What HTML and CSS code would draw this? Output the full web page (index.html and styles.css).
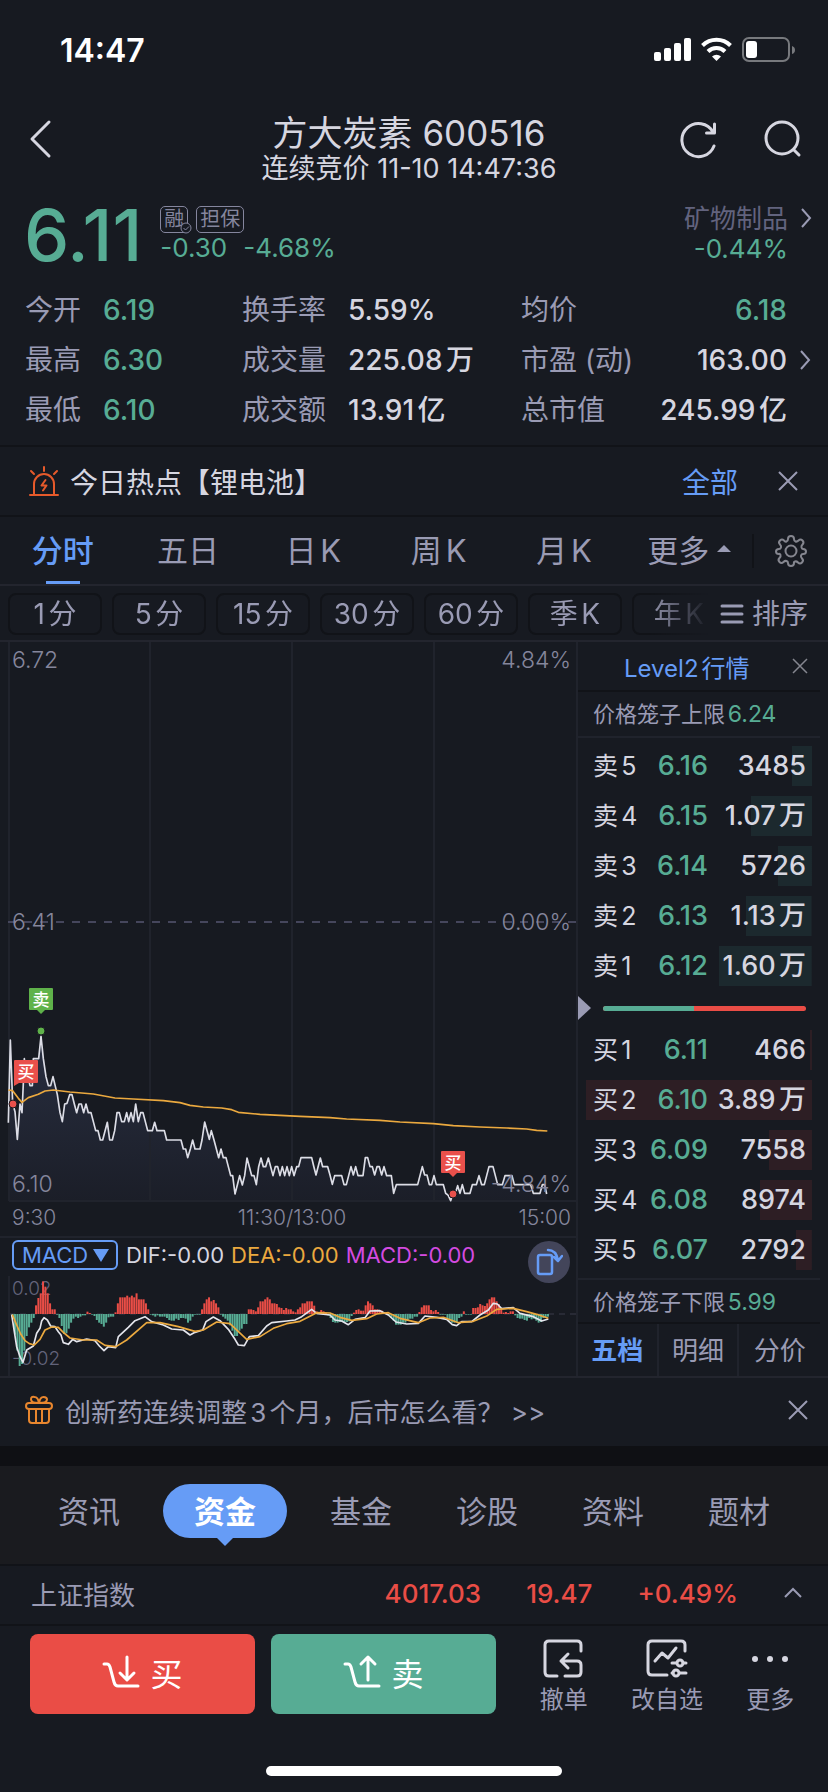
FILE: index.html
```html
<!DOCTYPE html>
<html lang="zh-CN">
<head>
  <meta charset="UTF-8">
  <meta name="viewport" content="width=device-width, initial-scale=1">
  <title>方大炭素 600516</title>
  <link rel="stylesheet" href="styles.css">
</head>
<body>
  <!-- 状态栏 -->
  <div class="status-bar">
    <span class="clock">14:47</span>
    <svg class="status-icons" viewBox="0 0 142 26" width="142" height="26">
      <g fill="#fff">
        <rect x="0" y="15" width="7" height="9" rx="2"/>
        <rect x="10" y="11" width="7" height="13" rx="2"/>
        <rect x="20" y="6" width="7" height="18" rx="2"/>
        <rect x="30" y="1" width="7" height="23" rx="2"/>
        <path d="M62.500 24l-4.500-4.500a6.500 6.500 0 0 1 9 0z"/>
      </g>
      <g fill="none" stroke="#fff" stroke-width="4">
        <path d="M48.500 8.500a20 20 0 0 1 28 0"/>
        <path d="M54 14.500a12 12 0 0 1 17 0"/>
      </g>
      <rect x="89" y="1" width="46" height="23" rx="6" fill="none" stroke="#77797d" stroke-width="2"/>
      <rect x="92" y="4" width="11" height="17" rx="3" fill="#fff"/>
      <path d="M138 9q3 1 3 4t-3 4z" fill="#77797d"/>
    </svg>
  </div>

  <!-- 标题 -->
  <header class="header">
    <button class="icon-btn" aria-label="返回">
      <svg width="24" height="40" viewBox="0 0 24 40"><path d="M21 3L4 20l17 17" class="line-light"/></svg>
    </button>
    <div class="header-title">
      <h1>方大炭素 600516</h1>
      <p>连续竞价 11-10 14:47:36</p>
    </div>
    <div class="header-actions">
      <button class="icon-btn" aria-label="刷新">
        <svg width="38" height="40" viewBox="0 0 38 40"><path d="M34 27A16.600 16.600 0 1 1 33 13M34.500 5v9h-8" class="line-light"/></svg>
      </button>
      <button class="icon-btn" aria-label="搜索">
        <svg width="38" height="38" viewBox="0 0 38 38"><circle cx="18" cy="18" r="16" class="line-light"/><path d="M30 30l5 5" class="line-light"/></svg>
      </button>
    </div>
  </header>

  <!-- 报价 -->
  <section class="quote">
    <div class="price">6.11</div>
    <div class="quote-info">
      <div class="tags">
        <span class="tag">融<svg class="tag-check" width="12" height="12" viewBox="0 0 12 12"><circle cx="6" cy="6" r="5" fill="#171a21" stroke="#85869e"/><path d="M3.500 6l2 2L9 4.500" fill="none" stroke="#85869e"/></svg></span>
        <span class="tag">担保</span>
      </div>
      <div class="change"><span>-0.30</span><span>-4.68%</span></div>
    </div>
    <a class="sector" href="#">
      <span class="sector-text"><span class="sector-name">矿物制品</span><span class="sector-change">-0.44%</span></span>
      <svg width="12" height="20" viewBox="0 0 12 20"><path d="M2 1l8 9-8 9" class="line-muted"/></svg>
    </a>
  </section>

  <section class="stats">
    <dl class="stats-col">
      <div><dt>今开</dt><dd class="down">6.19</dd></div>
      <div><dt>最高</dt><dd class="down">6.30</dd></div>
      <div><dt>最低</dt><dd class="down">6.10</dd></div>
    </dl>
    <dl class="stats-col">
      <div><dt>换手率</dt><dd>5.59%</dd></div>
      <div><dt>成交量</dt><dd>225.08万</dd></div>
      <div><dt>成交额</dt><dd>13.91亿</dd></div>
    </dl>
    <dl class="stats-col stats-end">
      <div><dt>均价</dt><dd class="down">6.18</dd></div>
      <div><dt>市盈 (动)</dt><dd>163.00<svg class="more-arrow" width="12" height="20" viewBox="0 0 12 20"><path d="M2 1l8 9-8 9" class="line-muted"/></svg></dd></div>
      <div><dt>总市值</dt><dd>245.99亿</dd></div>
    </dl>
  </section>

  <!-- 今日热点 -->
  <section class="hot">
    <svg width="32" height="32" viewBox="0 0 32 32" fill="none" stroke="#e65a2b" stroke-width="2" stroke-linecap="round" stroke-linejoin="round">
      <path d="M2 30h28M6 30V19a10 10 0 0 1 20 0v11M16 2v4M3 6l3 3M29 6l-3 3"/>
      <path d="M17.500 15l-4 5.500h5l-3.500 5"/>
    </svg>
    <span class="hot-text">今日热点【锂电池】</span>
    <a href="#" class="hot-all">全部</a>
    <button class="icon-btn" aria-label="关闭热点">
      <svg width="20" height="20" viewBox="0 0 20 20"><path d="M1 1l18 18M19 1L1 19" class="line-muted"/></svg>
    </button>
  </section>

  <!-- 周期切换 -->
  <nav class="tabs">
    <div class="tabs-list">
      <button class="tab active">分时</button>
      <button class="tab">五日</button>
      <button class="tab">日K</button>
      <button class="tab">周K</button>
      <button class="tab">月K</button>
      <button class="tab">更多<svg width="14" height="8" viewBox="0 0 14 8"><path d="M0 7l7-7 7 7z" fill="#9a9bb4"/></svg></button>
    </div>
    <button class="tabs-setting" aria-label="设置">
      <svg width="34" height="34" viewBox="0 0 34 34" fill="none" stroke="#85868f" stroke-width="2" stroke-linejoin="round">
        <path d="M14 5q0-3 3-3t3 3q0 2 1.500 2.500t3-1q2-2 4 0t0 4q-1.500 1.500-1 3T29 15q3 0 3 2.500T29 20q-1.500 0-2 1.500t1 3q2 2 0 4t-4 0q-1.500-1.500-3-1T20 29q0 3-3 3t-3-3q0-1.500-1.500-2t-3 1q-2 2-4 0t0-4q1.500-1.500 1-3T5 20q-3 0-3-2.500T5 15q1.500 0 2-1.500t-1-3q-2-2 0-4t4 0q1 1.500 2.500 1T14 5z"/>
        <circle cx="17" cy="17" r="5.500"/>
      </svg>
    </button>
  </nav>
  <div class="periods">
    <div class="periods-list">
      <button>1分</button>
      <button>5分</button>
      <button>15分</button>
      <button>30分</button>
      <button>60分</button>
      <button>季K</button>
      <button>年K</button>
    </div>
    <button class="sort">
      <svg width="24" height="20" viewBox="0 0 24 20"><path d="M2 2h20M2 10h20M2 18h20" stroke="#9a9bb4" stroke-width="3" stroke-linecap="round"/></svg>
      排序
    </button>
  </div>

  <main class="market">
    <div class="charts">
      <!-- 分时图 -->
      <svg class="chart" viewBox="0 642 576 594">
        <defs>
          <linearGradient id="area" x1="0" y1="0" x2="0" y2="1">
            <stop offset="0" stop-color="#282e40"/>
            <stop offset="1" stop-color="#1b1e28"/>
          </linearGradient>
        </defs>
        <polygon id="priceArea" fill="url(#area)" transform="translate(0 960) scale(.33333)"/>
        <path d="M9 642v559M150 642v559M292 642v559M434 642v559M9 1201h567" class="grid-line"/>
        <path d="M8 922H576" stroke="#45465c" stroke-width="2" stroke-dasharray="8 8"/>
        <g transform="translate(0 960) scale(.33333)" fill="none" stroke-width="5" stroke-linejoin="round">
          <polyline id="priceLine" stroke="#dcdde6" points="25,488 31,240 38,430 45,455 52,538 60,432 66,458 70,370 73,296 76,330 84,350 90,377 97,377 100,296 116,296 123,229 130,296 138,350 145,377 152,377 159,350 172,404 180,458 187,485 194,432 201,430 209,404 216,404 223,432 230,458 237,432 244,432 251,458 258,432 265,458 273,458 280,485 287,512 294,512 301,540 308,540 322,487 329,540 337,540 344,512 351,458 358,458 365,485 373,485 380,458 386,485 393,458 400,485 407,432 415,485 422,458 429,458 436,485 443,512 457,512 464,487 471,512 493,512 500,540 543,540 550,567 557,567 563,593 571,567 578,540 585,567 600,567 606,540 614,486 628,538 634,512 642,540 656,593 663,567 670,593 678,593 685,620 692,647 698,647 705,702 712,675 719,647 727,675 734,647 741,594 748,620 755,647 762,647 769,674 776,620 783,594 790,620 797,620 805,594 812,620 819,647 826,620 833,620 840,647 847,620 854,647 861,620 868,647 875,620 882,647 890,620 896,620 903,593 935,593 941,618 948,645 961,594 968,620 983,620 990,645 997,673 1004,647 1025,647 1032,674 1039,674 1046,647 1053,620 1060,645 1067,620 1074,647 1089,647 1096,593 1103,593 1110,620 1117,620 1124,645 1131,620 1138,620 1145,645 1152,620 1160,647 1174,647 1181,700 1189,674 1253,674 1267,620 1274,645 1281,645 1288,674 1295,674 1302,647 1309,674 1330,674 1337,700 1344,705 1352,722 1359,700 1366,700 1373,677 1380,700 1387,674 1394,700 1410,700 1417,674 1429,674 1437,647 1445,674 1453,674 1460,647 1467,620 1479,620 1486,647 1493,674 1507,674 1515,647 1536,647 1543,674 1592,674 1600,700 1620,700 1627,674 1634,674 1640,702"/>
          <polyline stroke="#eba93f" points="25,390 38,392 55,415 66,427 85,413 115,403 135,393 160,390 210,396 280,402 345,414 400,417 490,422 540,428 570,436 610,441 665,444 695,449 715,457 780,463 900,469 990,473 1040,477 1140,481 1200,486 1300,491 1360,497 1440,501 1520,504 1580,507 1610,511 1642,513"/>
        </g>
        <g class="axis">
          <text x="12" y="668">6.72</text>
          <text x="12" y="930">6.41</text>
          <text x="12" y="1192">6.10</text>
          <text x="571" y="668" text-anchor="end">4.84%</text>
          <text x="571" y="930" text-anchor="end">0.00%</text>
          <text x="571" y="1192" text-anchor="end">-4.84%</text>
        </g>
        <g class="axis axis-time">
          <text x="12" y="1225">9:30</text>
          <text x="292" y="1225" text-anchor="middle">11:30/13:00</text>
          <text x="571" y="1225" text-anchor="end">15:00</text>
        </g>
        <!-- 买卖点 -->
        <g class="marker">
          <path d="M30 988h22q1 0 1 1v20q0 1-1 1h-7l-4 4-4-4h-7q-1 0-1-1v-20q0-1 1-1z" fill="#5fb24a"/>
          <text x="41" y="1006">卖</text>
          <circle cx="41" cy="1031" r="4" fill="#5fb24a" stroke="#171a21"/>
          <path d="M15 1060h22q1 0 1 1v21q0 1-1 1H19l-5 3v-25q0-1 1-1z" fill="#e9504b"/>
          <text x="26" y="1078">买</text>
          <circle cx="13" cy="1104" r="4" fill="#e9504b" stroke="#171a21"/>
          <path d="M442 1151h22q1 0 1 1v20q0 1-1 1h-7l-4 4-4-4h-7q-1 0-1-1v-20q0-1 1-1z" fill="#e9504b"/>
          <text x="453" y="1169">买</text>
          <circle cx="453" cy="1194" r="4" fill="#e9504b" stroke="#171a21"/>
        </g>
      </svg>

      <!-- MACD -->
      <div class="indicator">
        <div class="indicator-select">
          <select aria-label="指标"><option>MACD</option></select>
          <svg width="16" height="13" viewBox="0 0 16 13"><path d="M0 0h16L8 13z" fill="#669cf6"/></svg>
        </div>
        <span>DIF:-0.00</span>
        <span class="dea">DEA:-0.00</span>
        <span class="macd">MACD:-0.00</span>
        <button class="rotate" aria-label="横屏">
          <svg width="28" height="28" viewBox="0 0 28 28" fill="none" stroke="#669cf6" stroke-width="2.500" stroke-linecap="round" stroke-linejoin="round">
            <rect x="3" y="7" width="14" height="19" rx="2"/>
            <path d="M13 2q8 0 10 10M19 9l4 4 4-5"/>
          </svg>
        </button>
      </div>
      <svg class="chart" viewBox="0 1276 576 100">
        <path d="M9 1314H576" stroke="#3a3b4a" stroke-dasharray="6 5"/>
        <g class="axis axis-small">
          <text x="12" y="1295">0.02</text>
          <text x="12" y="1365">-0.02</text>
        </g>
        <g transform="translate(0 1220) scale(.33333)" fill="none" stroke-width="5" stroke-linejoin="round">
          <g id="macdBars"></g>
          <polyline stroke="#e4e5ec" points="35,284 50,380 60,410 69,427 80,390 100,378 110,340 120,325 125,303 132,293 142,300 152,318 165,320 175,335 183,345 190,368 205,373 218,358 230,365 260,357 285,362 298,378 312,392 325,380 347,383 355,350 385,322 405,302 435,290 455,305 490,315 515,327 550,330 570,345 585,337 608,330 618,305 640,291 660,302 685,328 705,358 715,375 733,377 748,350 775,347 800,318 815,308 860,303 885,300 905,290 935,268 950,280 990,285 1005,300 1025,303 1045,314 1065,298 1095,293 1110,273 1140,272 1165,285 1188,306 1220,312 1255,310 1275,288 1310,292 1340,298 1357,314 1370,317 1385,305 1415,305 1440,285 1465,270 1480,250 1492,252 1505,266 1540,263 1560,280 1600,290 1625,303 1645,297"/>
          <polyline stroke="#eba93f" points="37,284 50,315 62,342 75,362 88,371 103,375 120,358 135,330 155,321 175,322 190,337 210,354 250,360 290,360 315,376 348,380 380,360 440,308 480,308 535,320 585,334 610,330 650,306 690,311 740,358 780,350 820,325 860,311 900,304 915,296 950,278 990,279 1020,292 1055,301 1100,296 1130,282 1165,278 1200,295 1255,308 1290,294 1330,292 1375,308 1420,304 1460,288 1490,268 1540,265 1580,275 1610,283 1645,295"/>
        </g>
        <path d="M9 1276v100" class="grid-line"/>
      </svg>
    </div>

    <!-- 五档盘口 -->
    <aside class="book">
      <div class="book-head">
        <a href="#">Level2行情</a>
        <button class="icon-btn" aria-label="关闭Level2">
          <svg width="16" height="16" viewBox="0 0 16 16"><path d="M1 1l14 14M15 1L1 15" stroke="#85868f" stroke-width="1.500"/></svg>
        </button>
      </div>
      <p class="book-limit">价格笼子上限<span class="down">6.24</span></p>
      <table class="book-table sell">
        <tr style="background-size: 9% 100%"><th>卖5</th><td class="down">6.16</td><td>3485</td></tr>
        <tr style="background-size: 27% 100%"><th>卖4</th><td class="down">6.15</td><td>1.07万</td></tr>
        <tr style="background-size: 15% 100%"><th>卖3</th><td class="down">6.14</td><td>5726</td></tr>
        <tr style="background-size: 29% 100%"><th>卖2</th><td class="down">6.13</td><td>1.13万</td></tr>
        <tr style="background-size: 41% 100%"><th>卖1</th><td class="down">6.12</td><td>1.60万</td></tr>
      </table>
      <div class="ratio">
        <svg width="13" height="24" viewBox="0 0 13 24"><path d="M0 0l13 12L0 24z" fill="#9a9bb4"/></svg>
        <div class="ratio-bar"><span style="width: 45%"></span></div>
      </div>
      <table class="book-table buy">
        <tr style="background-size: 1% 100%"><th>买1</th><td class="down">6.11</td><td>466</td></tr>
        <tr style="background-size: 100% 100%"><th>买2</th><td class="down">6.10</td><td>3.89万</td></tr>
        <tr style="background-size: 19% 100%"><th>买3</th><td class="down">6.09</td><td>7558</td></tr>
        <tr style="background-size: 23% 100%"><th>买4</th><td class="down">6.08</td><td>8974</td></tr>
        <tr style="background-size: 7% 100%"><th>买5</th><td class="down">6.07</td><td>2792</td></tr>
      </table>
      <p class="book-limit book-lower">价格笼子下限<span class="down">5.99</span></p>
      <div class="book-tabs">
        <button class="active">五档</button>
        <button>明细</button>
        <button>分价</button>
      </div>
    </aside>
  </main>

  <!-- 资讯提示 -->
  <section class="news">
    <svg width="28" height="30" viewBox="0 0 28 30" fill="none" stroke="#e8862e" stroke-width="2" stroke-linejoin="round">
      <rect x="1" y="8" width="26" height="6" rx="3"/>
      <path d="M4 14v11q0 3 3 3h14q3 0 3-3V14M11 14v14M17 14v14M14 8Q6 8 6 4.500T9.500 2Q13 2 14 8Q15 2 18.500 2T22 4.500Q22 8 14 8"/>
    </svg>
    <a href="#">创新药连续调整3个月，后市怎么看？ &gt;&gt;</a>
    <button class="icon-btn" aria-label="关闭资讯">
      <svg width="20" height="20" viewBox="0 0 20 20"><path d="M1 1l18 18M19 1L1 19" class="line-muted"/></svg>
    </button>
  </section>

  <nav class="info-tabs">
    <button>资讯</button>
    <button class="active">资金</button>
    <button>基金</button>
    <button>诊股</button>
    <button>资料</button>
    <button>题材</button>
  </nav>

  <!-- 指数 -->
  <div class="index">
    <span class="index-name">上证指数</span>
    <span>4017.03</span>
    <span>19.47</span>
    <span>+0.49%</span>
    <button class="icon-btn" aria-label="展开">
      <svg width="20" height="12" viewBox="0 0 20 12"><path d="M2 10l8-8 8 8" class="line-muted"/></svg>
    </button>
  </div>

  <!-- 底部操作 -->
  <footer class="actions">
    <button class="trade trade-buy">
      <svg width="38" height="36" viewBox="0 0 38 36" class="trade-icon"><path d="M2 10h3q2 0 3 3l4 15q1 4 4 4h20M25 3v22M18 19l7 7 7-7"/></svg>
      买
    </button>
    <button class="trade trade-sell">
      <svg width="38" height="36" viewBox="0 0 38 36" class="trade-icon"><path d="M2 10h3q2 0 3 3l4 15q1 4 4 4h20M25 26V3M18 10l7-7 7 7"/></svg>
      卖
    </button>
    <div class="tools">
      <button class="tool">
        <svg width="42" height="40" viewBox="0 0 42 40" class="tool-icon"><path d="M14 37H6q-4 0-4-4V6q0-4 4-4h28q4 0 4 4v6M22 37h12q4 0 4-4v-7q0-4-4-4H18M25 15l-7 7 7 7"/></svg>
        撤单
      </button>
      <button class="tool">
        <svg width="42" height="40" viewBox="0 0 42 40" class="tool-icon"><path d="M21 36H6q-4 0-4-4V6q0-4 4-4h29q4 0 4 4v6M9 22l7-8 6 5 8-10M26 24h4M37 24h3M26 34h1M34 34h6"/><circle cx="34" cy="24" r="3"/><circle cx="30" cy="34" r="3"/></svg>
        改自选
      </button>
      <button class="tool">
        <svg width="42" height="40" viewBox="0 0 42 40" fill="#d6d6e0"><circle cx="6" cy="20" r="3"/><circle cx="21" cy="20" r="3"/><circle cx="36" cy="20" r="3"/></svg>
        更多
      </button>
    </div>
  </footer>
  <div class="home-bar"></div>

  <script src="script.js"></script>
</body>
</html>
```
FILE: styles.css
```css
* {
  box-sizing: border-box;
}

body {
  margin: 0;
  background: #171a21;
  color: #d6d6e0;
  font-family: Inter, "Noto Sans CJK SC", sans-serif;
  font-size: 26px;
  text-autospace: normal;
}

h1,
p,
dl,
dd {
  margin: 0;
  font-weight: 400;
}

button {
  padding: 0;
  border: none;
  background: none;
  color: #9a9bb4;
  font: inherit;
  cursor: pointer;
}

a {
  color: inherit;
  text-decoration: none;
}

svg {
  display: block;
  flex-shrink: 0;
}

.icon-btn {
  display: flex;
  align-items: center;
}

.line-light {
  fill: none;
  stroke: #d6d6e0;
  stroke-width: 3;
  stroke-linecap: round;
  stroke-linejoin: round;
}

.line-muted {
  fill: none;
  stroke: #9a9bb4;
  stroke-width: 2;
}

.down {
  color: #57ac94;
}

/* 状态栏 */
.status-bar {
  display: flex;
  justify-content: space-between;
  align-items: center;
  height: 100px;
  padding: 0 32px 0 60px;
}

.clock {
  color: #fff;
  font-size: 32px;
  font-weight: 600;
}

/* 标题 */
.header {
  display: grid;
  grid-template-columns: 1fr auto 1fr;
  height: 90px;
  padding: 10px 26px 0 28px;
}

.header .icon-btn {
  height: 58px;
}

.header-title {
  margin-right: 12px;
  padding-top: 2px;
  text-align: center;
}

.header h1 {
  font-size: 35px;
  line-height: 42px;
}

.header p {
  font-size: 27px;
  line-height: 30px;
}

.header-actions {
  display: flex;
  justify-content: flex-end;
  gap: 46px;
}

/* 报价 */
.quote {
  display: flex;
  align-items: center;
  height: 88px;
  padding: 0 16px 0 24px;
}

.price {
  color: #57ac94;
  font-size: 72px;
  font-weight: 500;
}

.quote-info {
  margin-left: 18px;
}

.tags {
  display: flex;
  gap: 8px;
}

.tag {
  position: relative;
  padding: 0 3px;
  border: 1px solid #85869e;
  border-radius: 5px;
  color: #85869e;
  font-size: 20px;
  line-height: 25px;
}

.tag-check {
  position: absolute;
  right: -5px;
  bottom: -2px;
}

.change {
  display: flex;
  gap: 16px;
  color: #57ac94;
  line-height: 30px;
}

.sector {
  display: flex;
  gap: 12px;
  margin-left: auto;
}

.sector svg {
  margin-top: 4px;
}

.sector-text {
  display: flex;
  flex-direction: column;
  align-items: flex-end;
  line-height: 30px;
}

.sector-name {
  color: #62637e;
}

.sector-change {
  color: #57ac94;
}

.stats {
  display: grid;
  grid-template-columns: 217fr 279fr 266fr;
  padding: 7px 41px 10px 25px;
  border-bottom: 2px solid #111318;
  font-size: 28px;
}

.stats-col div {
  display: flex;
  gap: 22px;
  line-height: 50px;
}

.stats-col dt {
  color: #9a9bb4;
}

.stats-col dd {
  font-weight: 500;
}

.stats-end div {
  justify-content: space-between;
}

.stats-end dd {
  position: relative;
}

.more-arrow {
  position: absolute;
  top: 15px;
  left: calc(100% + 12px);
}

/* 今日热点 */
.hot {
  display: flex;
  align-items: center;
  height: 70px;
  padding: 0 30px 0 28px;
  border-bottom: 2px solid #111318;
  font-size: 28px;
}

.hot-text {
  margin-left: 10px;
}

.hot-all {
  margin-left: auto;
  margin-right: 40px;
  color: #669cf6;
}

/* 周期切换 */
.tabs {
  display: flex;
  align-items: center;
  height: 69px;
  border-bottom: 2px solid #23252e;
}

.tabs-list {
  display: grid;
  grid-template-columns: repeat(6, 1fr);
  flex: 1;
}

.tab {
  display: flex;
  justify-content: center;
  align-items: center;
  gap: 8px;
  position: relative;
  height: 67px;
  padding-bottom: 4px;
  font-size: 31px;
}

.tab.active {
  color: #669cf6;
  font-weight: 500;
}

.tab.active::after {
  content: "";
  position: absolute;
  bottom: 0;
  width: 34px;
  height: 3px;
  background: #669cf6;
}

.tabs-setting {
  display: flex;
  justify-content: center;
  width: 76px;
  border-left: 2px solid #111318;
}

.periods {
  display: flex;
  align-items: center;
  height: 56px;
  padding: 2px 20px 0 8px;
  border-bottom: 2px solid #23252e;
}

.periods-list {
  display: flex;
  flex: 1;
  gap: 10px;
  min-width: 0;
  overflow: hidden;
  mask-image: linear-gradient(to right, #000 640px, transparent 700px);
}

.periods-list button {
  flex: 0 0 94px;
  height: 42px;
  border: 2px solid #111318;
  border-radius: 8px;
  font-size: 28px;
  line-height: 38px;
}

.sort {
  display: flex;
  align-items: center;
  gap: 8px;
  font-size: 28px;
  line-height: 42px;
}

/* 图表 */
.market {
  display: grid;
  grid-template-columns: 576fr 252fr;
  border-bottom: 2px solid #23252e;
}

.charts,
.book {
  min-width: 0;
}

.chart {
  width: 100%;
  height: auto;
}

.grid-line {
  stroke: #20232c;
  stroke-width: 2;
}

.axis {
  fill: #85869c;
  font-size: 23px;
  font-weight: 300;
}

.axis-time {
  font-size: 21px;
}

.axis-small {
  fill: #62637a;
  font-size: 19px;
}

.marker {
  fill: #fff;
  font-size: 17px;
  font-weight: 500;
  text-anchor: middle;
}

.indicator {
  display: flex;
  align-items: center;
  gap: 7px;
  position: relative;
  height: 40px;
  padding: 0 0 4px 12px;
  border-top: 2px solid #20232c;
  font-size: 22px;
}

.indicator-select {
  position: relative;
  margin-right: 1px;
}

.indicator-select select {
  display: block;
  width: 106px;
  height: 30px;
  padding: 0 8px;
  border: 2px solid #669cf6;
  border-radius: 6px;
  background: none;
  color: #669cf6;
  font: inherit;
  line-height: 26px;
  appearance: none;
}

.indicator-select svg {
  position: absolute;
  top: 9px;
  right: 9px;
  pointer-events: none;
}

.dea {
  color: #eba93f;
}

.macd {
  color: #d44be0;
}

.rotate {
  display: flex;
  justify-content: center;
  align-items: center;
  position: absolute;
  top: 3px;
  right: 6px;
  width: 42px;
  height: 42px;
  border-radius: 50%;
  background: #43455a;
}

/* 五档盘口 */
.book {
  padding-right: 8px;
  border-left: 2px solid #20232c;
}

.book-head {
  display: flex;
  justify-content: space-between;
  align-items: center;
  height: 50px;
  padding: 0 12px 0 46px;
  border-bottom: 2px solid #111318;
  color: #669cf6;
  font-size: 24px;
}

.book-limit {
  height: 46px;
  padding-left: 15px;
  border-bottom: 2px solid #20232c;
  color: #9a9bb4;
  font-size: 22px;
  line-height: 44px;
}

.book-limit span {
  font-size: 23px;
}

.book-lower {
  border-top: 2px solid #20232c;
  border-bottom-color: #111318;
}

.book-table {
  width: calc(100% - 16px);
  margin: 0 8px;
  border-collapse: separate;
  border-spacing: 0 10px;
  font-size: 27px;
  font-weight: 500;
  table-layout: fixed;
}

.book-table tr {
  background: linear-gradient(#1c292e, #1c292e) no-repeat right;
}

.sell {
  margin-top: -2px;
}

.buy {
  margin-bottom: -2px;
}

.buy tr {
  background-image: linear-gradient(#2d1e24, #2d1e24);
}

.book-table th,
.book-table td {
  height: 40px;
  padding: 0;
  line-height: 40px;
  text-align: right;
  white-space: nowrap;
}

.book-table th {
  width: 54px;
  padding-left: 7px;
  font-size: 25px;
  font-weight: 400;
  text-align: left;
}

.book-table td:nth-child(2) {
  width: 68px;
}

.book-table td:last-child {
  padding-right: 6px;
}

.ratio {
  display: flex;
  align-items: center;
  gap: 12px;
  height: 24px;
  padding-right: 14px;
}

.ratio-bar {
  flex: 1;
  height: 5px;
  border-radius: 3px;
  background: #ea4d46;
  overflow: hidden;
}

.ratio-bar span {
  display: block;
  height: 100%;
  background: #57ac94;
}

.book-tabs {
  display: grid;
  grid-template-columns: repeat(3, 1fr);
}

.book-tabs button {
  height: 52px;
  padding-bottom: 4px;
  border-right: 2px solid #20232c;
}

.book-tabs button:last-child {
  border-right: none;
}

.book-tabs .active {
  color: #669cf6;
  font-weight: 700;
}

/* 资讯提示 */
.news {
  display: flex;
  align-items: center;
  height: 88px;
  padding: 0 20px 4px 25px;
  border-bottom: 20px solid #0f1014;
  color: #9a9bb4;
}

.news a {
  flex: 1;
  margin-left: 12px;
}

.info-tabs {
  display: flex;
  justify-content: space-between;
  height: 100px;
  padding: 18px 37px 0;
  border-bottom: 2px solid #111318;
  background: #1a1b1f;
}

.info-tabs button {
  width: 104px;
  height: 54px;
  padding-bottom: 4px;
  font-size: 31px;
}

.info-tabs .active {
  position: relative;
  width: 124px;
  border-radius: 27px;
  background: #669cf6;
  color: #fff;
  font-weight: 700;
}

.info-tabs .active::after {
  content: "";
  position: absolute;
  top: 100%;
  left: 50%;
  border: 8px solid transparent;
  border-top-color: #669cf6;
  border-bottom: none;
  transform: translateX(-50%);
}

/* 指数 */
.index {
  display: flex;
  align-items: center;
  gap: 45px;
  height: 60px;
  padding: 0 25px 4px 31px;
  border-bottom: 2px solid #111318;
  color: #ea4d46;
  font-weight: 500;
}

.index-name {
  margin-right: auto;
  color: #9a9bb4;
  font-weight: 400;
}

/* 底部操作 */
.actions {
  display: flex;
  gap: 16px;
  padding: 8px 6px 0 30px;
}

.trade {
  display: flex;
  flex: 225;
  justify-content: center;
  align-items: center;
  gap: 10px;
  height: 80px;
  padding-bottom: 4px;
  border-radius: 8px;
  color: #fff;
  font-size: 32px;
}

.trade-buy {
  background: #ea4d46;
}

.trade-sell {
  background: #57ac94;
}

.trade-icon,
.tool-icon {
  fill: none;
  stroke: #fff;
  stroke-width: 3;
  stroke-linecap: round;
  stroke-linejoin: round;
}

.tool-icon {
  stroke: #d6d6e0;
}

.tools {
  display: grid;
  grid-template-columns: repeat(3, 1fr);
  flex: 310;
}

.tool {
  display: flex;
  flex-direction: column;
  align-items: center;
  gap: 6px;
  padding-top: 5px;
  font-size: 24px;
  line-height: 30px;
}

.home-bar {
  width: 296px;
  height: 10px;
  margin: 51px auto 16px;
  border-radius: 5px;
  background: #fff;
}
```
FILE: script.js
```js
// MACD 柱高度，正数为红柱，负数为绿柱
const bars = [
  -8, -62, -110, -156, -150, -110, -66, -40, -26, -12, 26, 48, 62, 98, 82, 62, 32, 14, 14,
  -2, -12, -36, -60, -58, -44, -26, -14, -8, -12, -8, -4, -4, 7, 3, -2, -6, -18, -26, -30,
  -38, -26, -10, -8, -8, 5, 32, 50, 50, 50, 55, 50, 55, 50, 62, 44, 44, 44, 32, 14,
  -2, -4, -8, -4, -8, -8, -8, -12, -18, -20, -20, -14, -18, -12, -12, -14, -26, -20, -8,
  -2, -2, -2, 14, 32, 44, 50, 38, 42, 32, 20, -2, -8, -14, -20, -34, -50, -66, -66, -50,
  -44, -30, -30, 14, 14, 12, 8, 20, 38, 38, 44, 50, 44, 32, 32, 30, 20, 18, 12, 18, 14,
  14, 8, 5, 14, 20, 32, 32, 38, 38, 38, 25, 8, 6, 12, 8, 4, -4, -12, -24, -26, -26, -24,
  -24, -26, -24, -22, -6, 4, 12, 14, 10, 10, 26, 38, 32, 26, 14, 14, 12, 10, 5, 4, -4,
  -12, -20, -32, -32, -32, -26, -26, -18, -14, -14, -8, -8, 6, 20, 26, 26, 26, 12, 8, 12,
  6, -2, -2, -2, -14, -20, -26, -26, -24, -12, -8, 8, -2, -2, -2, 18, 18, 20, 30, 26, 24,
  32, 44, 50, 50, 38, 30, 14, 4, 6, 3, 8, 8, -4, -12, -14, -14, -18, -20, -12, -16, -14,
  -20, -26, -24, -12, -10, -8
];

const zero = 282;
const left = 35;
const step = (1648 - left) / bars.length;
const group = document.getElementById("macdBars");

bars.forEach(function (value, i) {
  const rect = document.createElementNS("http://www.w3.org/2000/svg", "rect");
  rect.setAttribute("x", left + i * step);
  rect.setAttribute("y", value > 0 ? zero - value : zero);
  rect.setAttribute("width", 6);
  rect.setAttribute("height", Math.abs(value));
  rect.setAttribute("fill", value > 0 ? "#ea4d46" : "#57ac94");
  group.appendChild(rect);
});

// 分时线下方的填充区域
const line = document.getElementById("priceLine").getAttribute("points");
document.getElementById("priceArea").setAttribute("points", line + " 1640,722 25,722");
```
